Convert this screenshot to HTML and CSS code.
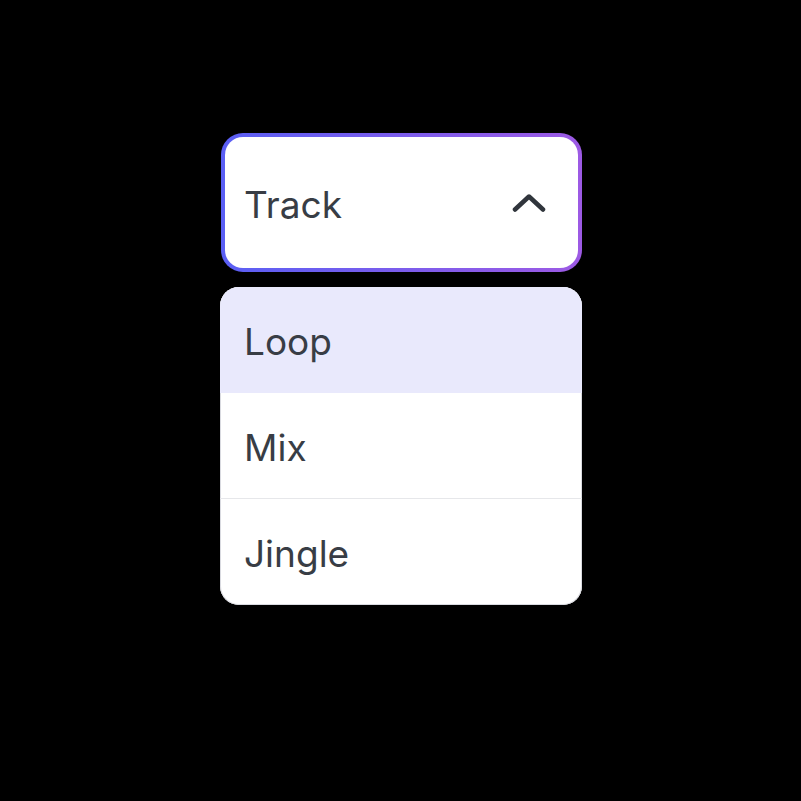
FILE: index.html
```html
<!DOCTYPE html>
<html lang="en">
<head>
<meta charset="utf-8">
<title>Track select</title>
<link rel="stylesheet" href="styles.css">
</head>
<body>
<div class="select">
  <button class="trigger" type="button">
    <span class="label">Track</span>
    <svg class="chev" width="34" height="18" viewBox="0 0 34 18" aria-hidden="true">
      <path d="M3 15.5 L17 2.5 L31 15.5" fill="none" stroke="#30353c" stroke-width="4.5" stroke-linecap="round" stroke-linejoin="round"/>
    </svg>
  </button>
  <ul class="menu">
    <li class="item active">Loop</li>
    <li class="item">Mix</li>
    <li class="item">Jingle</li>
  </ul>
</div>
</body>
</html>
```
FILE: styles.css
```css
html, body {
  margin: 0;
  padding: 0;
  background: #000;
}
body {
  font-family: Inter, "Noto Sans", sans-serif;
  color: #383d45;
}
.select {
  width: 362px;
  margin: 133px 0 0 220px;
  display: flex;
  flex-direction: column;
  gap: 15px;
}
.trigger {
  box-sizing: border-box;
  width: 361px;
  height: 139px;
  margin-left: 1px;
  border: 4px solid transparent;
  border-radius: 22px;
  background: linear-gradient(#fff, #fff) padding-box,
              linear-gradient(90deg, #5a5ff4, #9d5ae4) border-box;
  display: flex;
  align-items: center;
  justify-content: space-between;
  padding: 0 32px 0 19px;
  font: inherit;
  color: inherit;
  cursor: pointer;
}
.label {
  font-size: 37px;
  line-height: 1;
  color: #383d45;
  margin-top: 3px;
}
.chev {
  display: block;
}
.menu {
  list-style: none;
  margin: 0;
  padding: 0;
  background: #fff;
  border-radius: 19px;
  overflow: hidden;
  box-shadow: inset 0 0 0 1px #d9dae0;
}
.item {
  box-sizing: border-box;
  height: 106px;
  display: flex;
  align-items: center;
  padding: 3px 24px 0;
  font-size: 37px;
  line-height: 1;
  border-bottom: 1px solid #e6e7ea;
}
.item:last-child {
  border-bottom: none;
}
.item.active {
  background: #e9e9fc;
  border-bottom-color: #e9e9fc;
}
```
